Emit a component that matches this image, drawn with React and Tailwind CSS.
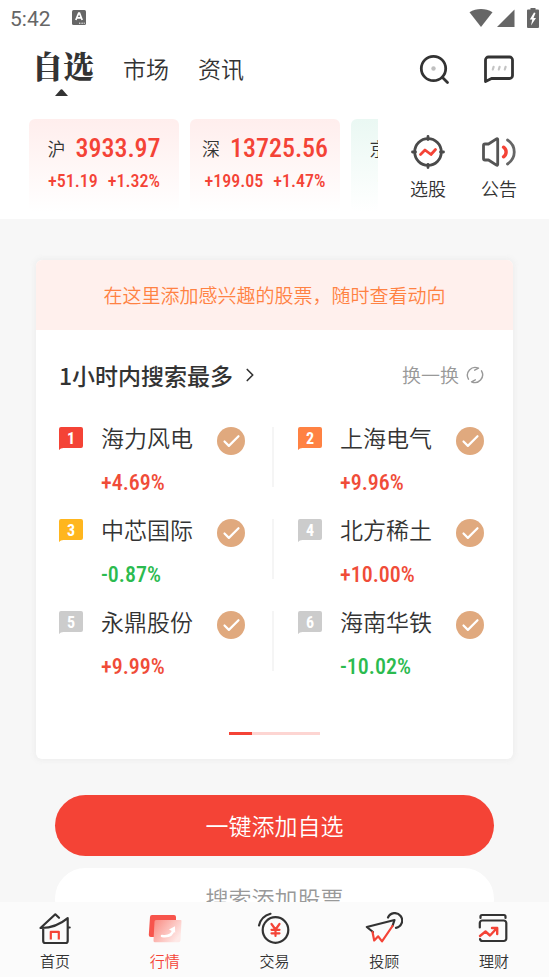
import React from 'react';
import { ChevronRight, Check } from 'lucide-react';
import clsx from 'clsx';

const NUM = "font-['Roboto_Condensed','Liberation_Sans_Narrow','Roboto',sans-serif]";

const indices = [
    { name: '沪', value: '3933.97', diff: '+51.19', pct: '+1.32%', up: true },
    { name: '深', value: '13725.56', diff: '+199.05', pct: '+1.47%', up: true },
    { name: '京', value: '1529.31', diff: '-5.92', pct: '-0.39%', up: false },
];

const stocks = [
    { name: '海力风电', pct: '+4.69%', badge: 'text-[#f44336]' },
    { name: '上海电气', pct: '+9.96%', badge: 'text-[#ff8243]' },
    { name: '中芯国际', pct: '-0.87%', badge: 'text-[#ffb61e]' },
    { name: '北方稀土', pct: '+10.00%', badge: 'text-[#cccccc]' },
    { name: '永鼎股份', pct: '+9.99%', badge: 'text-[#cccccc]' },
    { name: '海南华铁', pct: '-10.02%', badge: 'text-[#cccccc]' },
];

function StatusBar() {
    return (
        <div className="flex h-9 items-center px-2.5 text-[#666666]">
            <span className="pt-0.5 font-['Roboto',sans-serif] text-[21px] leading-6 font-normal">5:42</span>
            <svg className="ml-5" width="16" height="16" viewBox="0 0 16 16">
                <rect x="1" y="0" width="14" height="15" rx="1.5" fill="currentColor"/>
                <path d="M4.8 10 7.700 3.200h.8L11.200 10M5.800 7.900h4.400" fill="none" stroke="#fff" strokeWidth="1.700"/>
                <path d="M8 13.200h6" stroke="#fff" strokeWidth="1" strokeDasharray="1 .6"/>
            </svg>
            <svg className="ml-auto" width="24" height="20" viewBox="0 0 24 20">
                <path d="M.5 4.200C4 1.900 8 1 12 1s8 .9 11.500 3.200L12 19Z" fill="currentColor"/>
            </svg>
            <svg className="ml-1" width="18" height="20" viewBox="0 0 18 20">
                <path d="M17.500 1.500V19H0Z" fill="currentColor"/>
            </svg>
            <svg className="ml-3" width="12" height="20" viewBox="0 0 12 20">
                <path d="M3.500 0h5v1.500H11a1 1 0 0 1 1 1V19a1 1 0 0 1-1 1H1a1 1 0 0 1-1-1V2.500a1 1 0 0 1 1-1h2.500Z" fill="currentColor"/>
                <path d="M7 4.500 2.800 11.500h2.500L4 17.500l5-7.500H6.500L8.500 5Z" fill="#fff"/>
            </svg>
        </div>
    );
}

function SearchIcon() {
    return (
        <svg width="32" height="32" viewBox="0 0 32 32" fill="none" stroke="#333333" strokeWidth="2.800" strokeLinecap="round">
            <circle cx="14.500" cy="14.500" r="12.200"/>
            <path d="m23.500 23.500 5 5"/>
            <circle cx="14.500" cy="14.500" r="2.200" fill="#bfbfbf" stroke="none"/>
        </svg>
    );
}

function MessageIcon() {
    return (
        <svg width="32" height="32" viewBox="0 0 32 32" fill="none" strokeLinejoin="round" strokeLinecap="round">
            <path d="M2.500 27.500V6a3 3 0 0 1 3-3H26.500a3 3 0 0 1 3 3V21.500a3 3 0 0 1-3 3H8.500Z" stroke="#333333" strokeWidth="2.800"/>
            <path d="m9.800 15.500 .8-2.600m5.200 2.600.8-2.600m5.200 2.600.8-2.600" stroke="#c4c4c4" strokeWidth="2.200"/>
        </svg>
    );
}

function PickIcon() {
    return (
        <svg width="36" height="36" viewBox="0 0 36 36" fill="none" strokeLinecap="round" strokeLinejoin="round">
            <circle cx="18" cy="18" r="13.300" stroke="#4a4a4a" strokeWidth="2.800"/>
            <path d="M18 2.500v3M18 30.500v3M2.500 18h3M30.500 18h3" stroke="#4a4a4a" strokeWidth="2.800"/>
            <path d="m10.500 20.500 4.500-4.500 6 4.500 4.500-5" stroke="#f44336" strokeWidth="2.800"/>
        </svg>
    );
}

function NoticeIcon() {
    return (
        <svg width="36" height="36" viewBox="0 0 36 36" fill="none" strokeLinecap="round" strokeLinejoin="round">
            <path d="M2.500 11.500a1.500 1.500 0 0 1 1.500-1.500H7.500l8-5.200c.6-.4 1.200 0 1.200.6v25.200c0 .6-.6 1-1.200.6L7.500 26H4A1.500 1.500 0 0 1 2.500 24.500Z" stroke="#555555" strokeWidth="2.800"/>
            <path d="M22.500 13.200c3.500 2.500 3.500 7 0 9.600" stroke="#f44336" strokeWidth="3.400"/>
            <path d="M26.500 6c9 6 9 18 0 24" stroke="#666666" strokeWidth="2.800"/>
        </svg>
    );
}

function RefreshIcon() {
    return (
        <svg width="20" height="20" viewBox="0 0 20 20" fill="none" stroke="currentColor" strokeWidth="1.400" strokeLinecap="round" strokeLinejoin="round">
            <path d="M3.500 14.200A7.800 7.800 0 0 1 13.500 3.200l-3.800 2"/>
            <path d="M16.500 5.800A7.800 7.800 0 0 1 6.500 16.800l3.800-2"/>
        </svg>
    );
}

function HomeIcon() {
    return (
        <svg width="34" height="34" viewBox="0 0 34 34" fill="none" strokeLinecap="round" strokeLinejoin="round" strokeWidth="2.200">
            <path d="M5.200 16.500v12.500a2 2 0 0 0 2 2h20.500a2 2 0 0 0 2-2V6.200C24 11 16 16.300 2.500 16L17.300 2.300l3.700 3.500M29.700 15.500h2" stroke="#333333"/>
            <path d="M12.800 27.500v-7.700h8v7.700" stroke="#f44336" strokeLinecap="butt"/>
        </svg>
    );
}

function MarketIcon() {
    return (
        <svg width="34" height="34" viewBox="0 0 34 34" fill="none">
            <defs>
                <linearGradient id="front" x1="0" y1="0" x2="1" y2=".6">
                    <stop offset="0" stopColor="#f98a81"/>
                    <stop offset="1" stopColor="#fee9e7"/>
                </linearGradient>
            </defs>
            <path d="M4 3h22a2 2 0 0 1 2 2v18a2 2 0 0 1-2 2H2.800a2 2 0 0 1-2-2L2 5a2 2 0 0 1 2-2Z" fill="#f7544c"/>
            <path d="M8 8h24.500a1 1 0 0 1 1 1.200L32.500 28.500a2 2 0 0 1-2 1.700H7a1.500 1.500 0 0 1-1.500-1.500L6.500 9.500A1.500 1.500 0 0 1 8 8Z" fill="url(#front)"/>
            <path d="M14 24c6.500 1 10.500-1.500 11.500-6.500" stroke="#fff" strokeWidth="2.600" strokeLinecap="round"/>
            <path d="M21 17.500 27 14.200l.2 6.500Z" fill="#fff"/>
        </svg>
    );
}

function TradeIcon() {
    return (
        <svg width="34" height="34" viewBox="0 0 34 34" fill="none" strokeLinecap="round" strokeLinejoin="round" strokeWidth="2.200">
            <circle cx="18.500" cy="18" r="12.800" stroke="#333333"/>
            <path d="M2 13.500A16 16 0 0 1 13.500 1.800" stroke="#333333"/>
            <path d="m14.500 12 4 5.500 4-5.500M18.500 17.500v6.500M14.500 17.800h8M14.500 21.300h8" stroke="#f44336"/>
        </svg>
    );
}

function AdviserIcon() {
    return (
        <svg width="38" height="34" viewBox="0 0 38 34" fill="none" strokeLinecap="round" strokeLinejoin="round" strokeWidth="2.200">
            <path d="M8 20 1.800 15 29.500 8 27.500 14" stroke="#333333"/>
            <path d="m7.500 20 1.700 8.500 4-4.200 3.800 5L27.500 14" stroke="#f44336"/>
            <path d="M23 5.500a7.400 7.400 0 1 1 8 10.300" stroke="#333333"/>
        </svg>
    );
}

function WealthIcon() {
    return (
        <svg width="34" height="34" viewBox="0 0 34 34" fill="none" strokeLinecap="round" strokeLinejoin="round" strokeWidth="2.200">
            <path d="M3.500 6V4.500A1.500 1.500 0 0 1 5 3h22A1.500 1.500 0 0 1 28.500 4.500V6" stroke="#333333"/>
            <path d="M2.800 15.500V11a2.500 2.500 0 0 1 2.500-2.500h21.500a2.500 2.500 0 0 1 2.500 2.500V26.500a2.500 2.500 0 0 1-2.500 2.500H5.500a2.500 2.500 0 0 1-2.500-2" stroke="#333333"/>
            <path d="m3 24 5.500-4.500 4.500 4 7-7.500m-5 0h5.200v6" stroke="#f44336" strokeWidth="2.400"/>
        </svg>
    );
}

function Header() {
    return (
        <header className="bg-white pb-[7px]">
            <StatusBar/>
            <div className="flex h-[67px] items-center pr-[34px] pl-8 text-[#333333]">
                <nav className="flex items-center gap-[29px] pb-[3px] text-[23px] leading-8">
                    <a href="#watchlist" className="relative pb-1.5 font-['Noto_Serif_CJK_SC','Noto_Sans_CJK_SC',serif] text-[31px] font-black">
                        自选
                        <svg className="absolute top-10 left-[23px]" width="13" height="7" viewBox="0 0 13 7">
                            <path d="M0 7 5.700.600q.8-.8 1.600 0L13 7Z" fill="#333333"/>
                        </svg>
                    </a>
                    <a href="#market">市场</a>
                    <a href="#news">资讯</a>
                </nav>
                <div className="ml-auto flex gap-8">
                    <button aria-label="搜索"><SearchIcon/></button>
                    <button aria-label="消息"><MessageIcon/></button>
                </div>
            </div>
            <div className="flex pt-4">
                <div className="flex min-w-0 flex-1 gap-[11px] overflow-hidden pl-[29px]">
                    {indices.map(i => (
                        <div
                            key={i.name}
                            className={clsx('flex h-[93px] w-[150px] shrink-0 flex-col items-center rounded-md bg-linear-to-b to-white pt-[13px] whitespace-nowrap', i.up ? 'from-[#ffeeed] text-[#f44336]' : 'from-[#eaf8f3] text-[#22b573]')}
                        >
                            <div className="flex items-center gap-2.5 leading-8">
                                <span className="text-[18px] text-[#333333]">{i.name}</span>
                                <span className={clsx(NUM, 'text-[26px] font-medium')}>{i.value}</span>
                            </div>
                            <div className={clsx(NUM, 'flex gap-2.5 pt-px text-[18px] leading-8 font-medium')}>
                                <span>{i.diff}</span>
                                <span>{i.pct}</span>
                            </div>
                        </div>
                    ))}
                </div>
                <div className="flex gap-[35px] pt-[15px] pr-8 pl-8 text-[18px] leading-6 text-[#333333]">
                    <button className="flex flex-col items-center gap-1.5"><PickIcon/>选股</button>
                    <button className="flex flex-col items-center gap-1.5"><NoticeIcon/>公告</button>
                </div>
            </div>
        </header>
    );
}

function StockRow({ stock, rank }) {
    const [picked, setPicked] = React.useState(true);
    const odd = rank % 2 === 1;

    return (
        <li className={clsx('flex h-[60px] items-start', odd && 'border-r-2 border-[#f5f5f5]')}>
            <span className="grid shrink-0">
                <svg className={clsx('col-start-1 row-start-1', stock.badge)} width="24" height="23" viewBox="0 0 24 23">
                    <path d="M2 0h20a2 2 0 0 1 2 2v17a2 2 0 0 1-2 2H4.500Q1.500 21.200 0 23V2a2 2 0 0 1 2-2Z" fill="currentColor"/>
                </svg>
                <span className={clsx(NUM, 'col-start-1 row-start-1 text-center text-[16px] leading-6 font-bold text-white')}>{rank}</span>
            </span>
            <div className="ml-[18px]">
                <div className="-mt-1.5 text-[23px] leading-8 whitespace-nowrap text-[#333333]">{stock.name}</div>
                <div className={clsx(NUM, 'mt-3.5 text-[22px] leading-8 font-medium', stock.pct[0] === '+' ? 'text-[#f04c38]' : 'text-[#2bbb4f]')}>{stock.pct}</div>
            </div>
            <label className="ml-6 grid size-7 shrink-0 cursor-pointer place-items-center rounded-full bg-[#e0a97e] text-white">
                <input type="checkbox" className="sr-only" aria-label={stock.name} checked={picked} onChange={e => setPicked(e.target.checked)}/>
                {picked && <Check size={21} strokeWidth={2.5}/>}
            </label>
        </li>
    );
}

function Recommend() {
    return (
        <section className="mx-9 overflow-hidden rounded-md bg-white shadow-[0_0_4px_3px_#f1f1f1]">
            <p className="bg-[#fff0ed] text-center text-[19px] leading-[70px] text-[#ff8243]">在这里添加感兴趣的股票，随时查看动向</p>
            <div className="flex items-center justify-between pt-[27px] pr-7 pl-[23px]">
                <a href="#hot" className="flex items-center gap-1.5 text-[23px] leading-9 font-medium text-[#333333]">
                    1小时内搜索最多 <ChevronRight size={22} strokeWidth={1.8}/>
                </a>
                <button className="flex items-center gap-1.5 text-[19px] leading-9 text-[#999999]">换一换 <RefreshIcon/></button>
            </div>
            <ol className="grid grid-cols-2 gap-x-6 gap-y-8 pt-[34px] pl-[23px]">
                {stocks.map((s, i) => <StockRow key={s.name} stock={s} rank={i + 1}/>)}
            </ol>
            <div className="mx-auto mt-[61px] mb-6 h-[3px] w-[91px] bg-[#fdd5d2]">
                <div className="h-full w-1/4 bg-[#f44336]"/>
            </div>
        </section>
    );
}

const tabs = [
    { label: '首页', Icon: HomeIcon },
    { label: '行情', Icon: MarketIcon, active: true },
    { label: '交易', Icon: TradeIcon },
    { label: '投顾', Icon: AdviserIcon },
    { label: '理财', Icon: WealthIcon },
];

export default function App() {
    return (
        <div className="flex h-screen flex-col bg-[#f7f7f7] font-['Noto_Sans_CJK_SC',sans-serif] font-[350]">
            <Header/>
            <main className="min-h-0 flex-1 overflow-y-auto pt-[41px] [scrollbar-width:none]">
                <Recommend/>
                <div className="mx-[55px] mt-9 flex flex-col gap-3 text-[23px]">
                    <button className="h-[61px] rounded-full bg-[#f44336] text-white">一键添加自选</button>
                    <button className="h-[61px] rounded-full bg-white text-[#999999]">搜索添加股票</button>
                </div>
            </main>
            <nav className="grid h-[75px] shrink-0 grid-cols-5 bg-[#fbfbfb]">
                {tabs.map(({ label, Icon, active }) => (
                    <a key={label} href={`#${label}`} className={clsx('flex flex-col items-center gap-[5px] pt-2.5 text-[15px] leading-5', active ? 'text-[#f44336]' : 'text-[#333333]')}>
                        <Icon/>
                        {label}
                    </a>
                ))}
            </nav>
        </div>
    );
}
